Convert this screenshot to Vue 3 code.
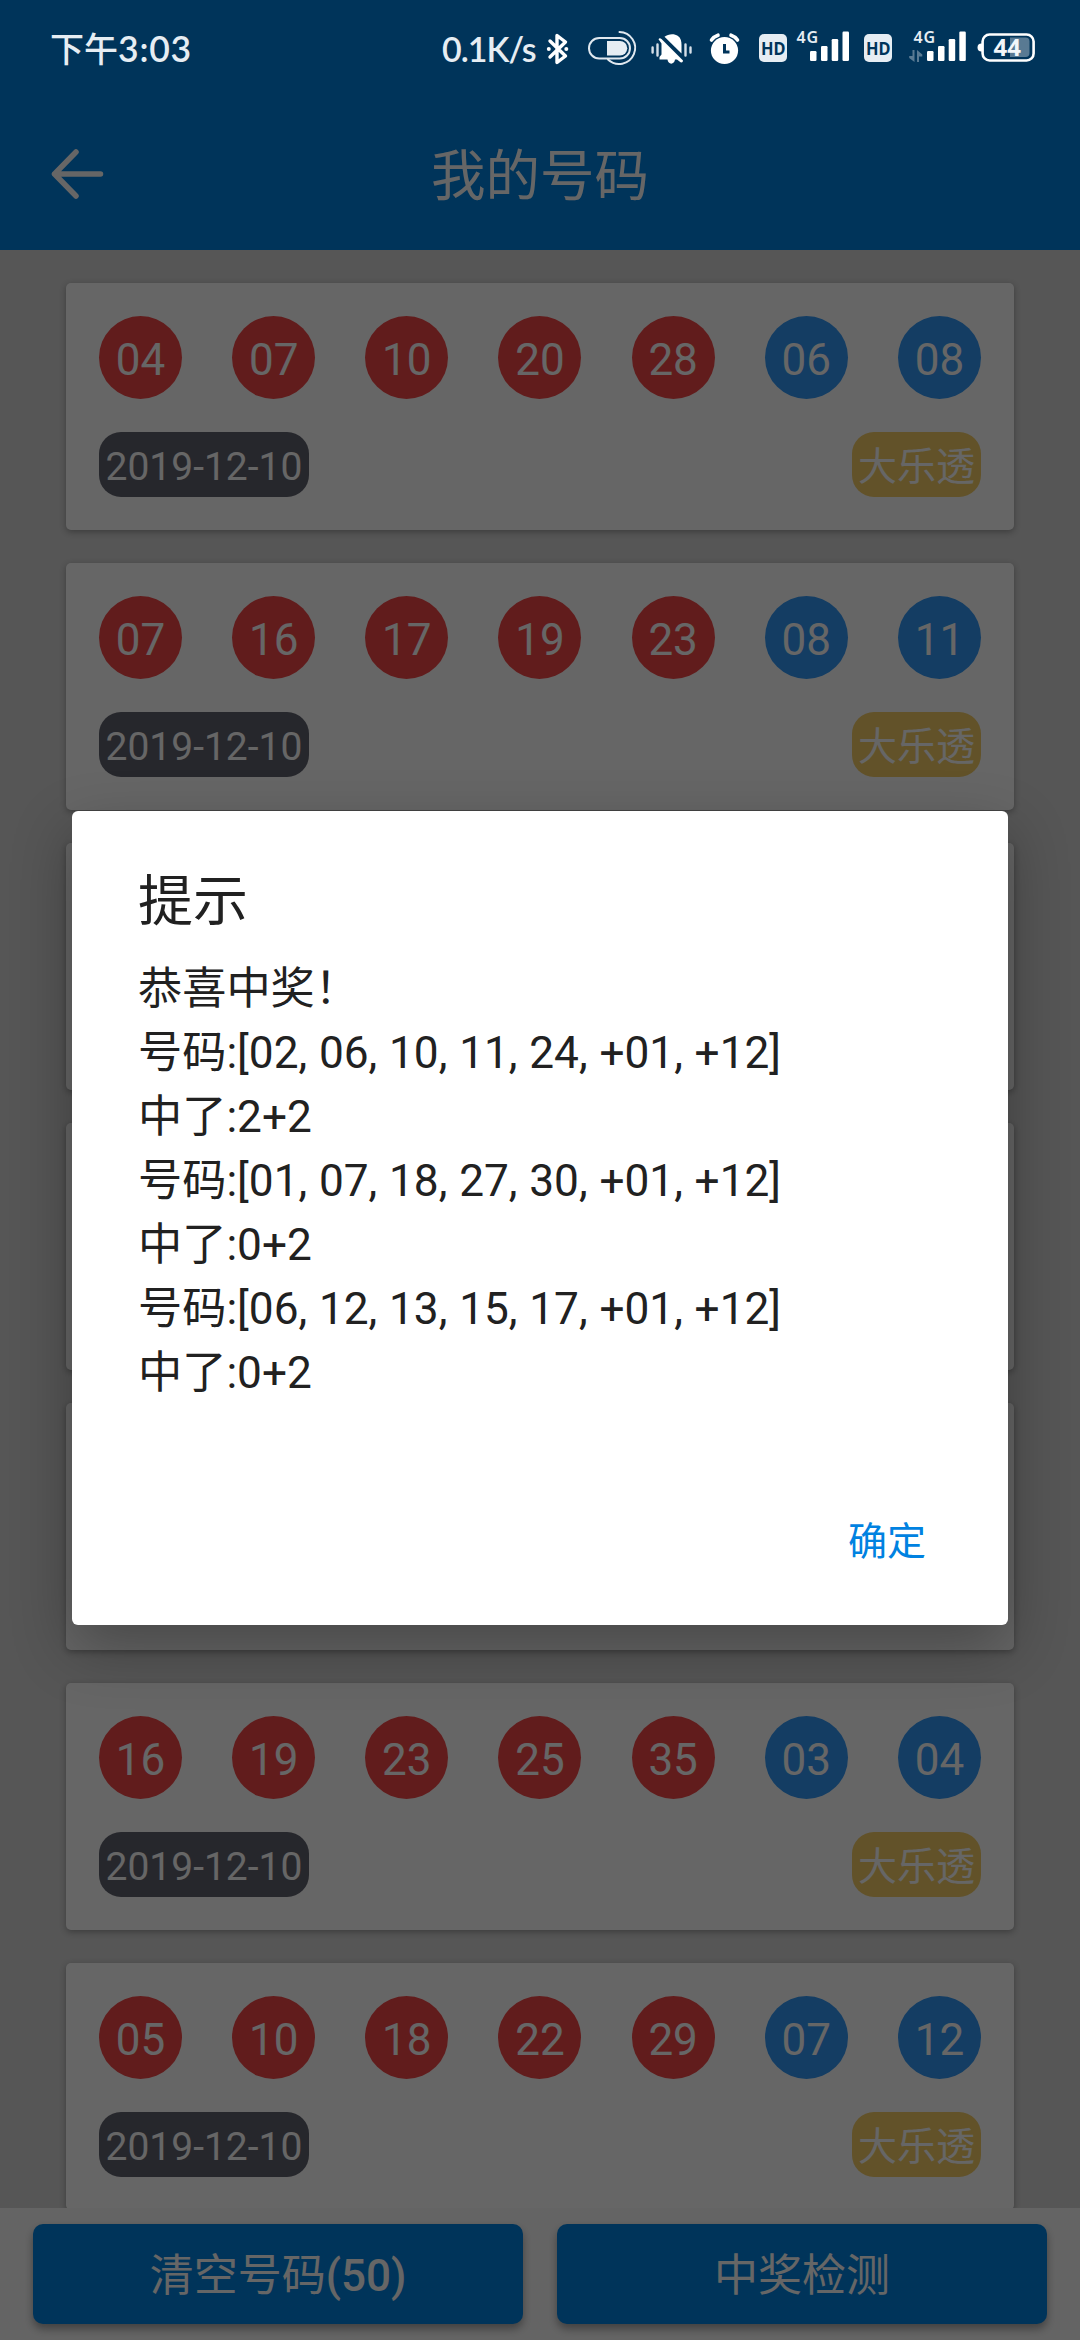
<script setup>
const cards = [
  { red: ['04', '07', '10', '20', '28'], blue: ['06', '08'] },
  { red: ['07', '16', '17', '19', '23'], blue: ['08', '11'] },
  { red: [], blue: [] },
  { red: [], blue: [] },
  { red: [], blue: [] },
  { red: ['16', '19', '23', '25', '35'], blue: ['03', '04'] },
  { red: ['05', '10', '18', '22', '29'], blue: ['07', '12'] },
]

const lines = [
  '恭喜中奖！',
  '号码:[02, 06, 10, 11, 24, +01, +12]',
  '中了:2+2',
  '号码:[01, 07, 18, 27, 30, +01, +12]',
  '中了:0+2',
  '号码:[06, 12, 13, 15, 17, +01, +12]',
  '中了:0+2',
]
</script>

<template>
  <div class="screen">
    <header class="header">
      <svg class="back" width="60" height="60" viewBox="0 0 60 60">
        <path d="M28 8 6.500 30 28 52M6.500 30H52.500" />
      </svg>
      <h1>我的号码</h1>
    </header>

    <main class="list">
      <section v-for="(card, i) in cards" :key="i" class="card">
        <template v-if="card.red.length">
          <div class="balls">
            <span v-for="n in card.red" :key="'r' + n" class="ball red">{{ n }}</span>
            <span v-for="n in card.blue" :key="'b' + n" class="ball blue">{{ n }}</span>
          </div>
          <div class="meta">
            <span class="tag date">2019-12-10</span>
            <span class="tag kind">大乐透</span>
          </div>
        </template>
      </section>
    </main>

    <footer class="actions">
      <button type="button">清空号码<b>(50)</b></button>
      <button type="button">中奖检测</button>
    </footer>

    <div class="mask">
      <div class="dialog">
        <h2>提示</h2>
        <div class="message">
          <p v-for="(line, i) in lines" :key="i">{{ line }}</p>
        </div>
        <div class="confirm">确定</div>
      </div>
    </div>

    <div class="status">
      <span class="time">下午<i>3:03</i></span>
      <span class="speed">0.1K/s</span>
      <!-- bluetooth -->
      <svg width="40" height="94" viewBox="540 0 40 94">
        <path class="line" stroke-width="3.400" d="M550 41 565.500 56 557 62.500V35.500L565.500 42 550 57" />
        <circle cx="548.800" cy="49" r="2" /><circle cx="566.300" cy="49" r="2" />
      </svg>
      <!-- power switch -->
      <svg width="62" height="94" viewBox="580 0 62 94">
        <rect class="line dim" x="589" y="38" width="41" height="20.500" rx="10.200" stroke-width="2" />
        <path class="soft" d="M607 41h13a7 7 0 0 1 0 14.500h-13z" />
        <path class="line dim" stroke-width="2" d="M619.500 32a16 16 0 1 1-11.500 27.500" />
      </svg>
      <!-- silent -->
      <svg width="58" height="94" viewBox="642 0 58 94">
        <path d="M664.500 36.800C668 34 674 33.200 678 36c3 2.200 3.500 5.500 3.500 9v8.500z" />
        <path d="M658.500 39.300q1-1.800 3-.3L683 60.500q0 2.500-2.500 1.800L677 59.500h-2c-.5 5.500-7 5.500-7.500 0H659.500v-2.500l2-2.500V43.500z" />
        <path class="line bars" stroke-width="2.400" d="M652.600 47.500v5M657.500 44.500v11M685.500 44.500v11M690.500 47.500v5" />
      </svg>
      <!-- alarm -->
      <svg width="52" height="94" viewBox="700 0 52 94">
        <circle cx="724.500" cy="50.500" r="13.600" />
        <path class="line" stroke-width="3.600" d="M711.500 40q2.500-3.500 6.500-4.800M737.500 40q-2.500-3.500-6.500-4.800" />
        <path class="cut" d="M724.500 44v8h5" />
      </svg>
      <!-- HD -->
      <svg width="40" height="94" viewBox="752 0 40 94">
        <rect class="soft" x="759" y="34" width="28" height="28" rx="5" />
        <text class="hd" x="761" y="55.300" textLength="24.500" lengthAdjust="spacingAndGlyphs">HD</text>
      </svg>
      <svg width="64" height="94" viewBox="792 0 64 94">
        <text class="net" x="796.500" y="43" textLength="21.500">4G</text>
        <rect x="810" y="51" width="6.500" height="10" rx="1.200" /><rect x="821" y="46" width="6.500" height="15" rx="1.200" />
        <rect x="831.700" y="39" width="6.500" height="22" rx="1.200" /><rect x="842.500" y="31.500" width="6.500" height="29.500" rx="1.200" />
      </svg>
      <svg width="44" height="94" viewBox="856 0 44 94">
        <rect class="soft" x="864" y="34" width="28" height="28" rx="5" />
        <text class="hd" x="866" y="55.300" textLength="24.500" lengthAdjust="spacingAndGlyphs">HD</text>
      </svg>
      <svg width="72" height="94" viewBox="900 0 72 94">
        <text class="net" x="913.500" y="43" textLength="21.500">4G</text>
        <path class="faint" d="M912.500 50h2v12l-5.300-4v-2h3.300zM917 62h2v-5.500h3.300v-2L917 50z" />
        <rect x="927" y="51" width="6.500" height="10" rx="1.200" /><rect x="938" y="46" width="6.500" height="15" rx="1.200" />
        <rect x="948.700" y="39" width="6.500" height="22" rx="1.200" /><rect x="959.300" y="31.500" width="6.500" height="29.500" rx="1.200" />
      </svg>
      <!-- battery -->
      <svg width="108" height="94" viewBox="972 0 108 94">
        <rect class="line" x="982.600" y="34.500" width="51" height="26" rx="7" stroke-width="2.600" />
        <path d="M982 43.500h-.5a3.500 3.500 0 0 0 0 8h.5z" />
        <path class="faint" d="M1010 37.500h15.500a4 4 0 0 1 4 4v11.500a4 4 0 0 1-4 4H1010z" />
        <text class="pct" x="993.500" y="56" textLength="27.500">44</text>
      </svg>
    </div>
  </div>
</template>

<style>
body {
  margin: 0;
  overflow: hidden;
}
</style>

<style scoped>
.screen {
  position: relative;
  display: flex;
  flex-direction: column;
  width: 1080px;
  height: 2340px;
  overflow: hidden;
  background: #d6d6d6;
  font-family: Roboto, "Noto Sans CJK SC", sans-serif;
}
h1, h2, p {
  margin: 0;
  font-weight: 400;
}

/* header */
.header {
  box-sizing: border-box;
  flex: 0 0 250px;
  display: flex;
  align-items: center;
  padding: 98px 48px 0;
  background: #0082e1;
  color: #fff;
}
.back {
  flex: none;
  fill: none;
  stroke: #fff;
  stroke-width: 5.5;
  stroke-linecap: round;
  stroke-linejoin: round;
}
.header h1 {
  flex: 1;
  margin-right: 60px;
  padding-top: 3px;
  text-align: center;
  font-size: 54.5px;
  line-height: 80px;
}

/* ticket list */
.list {
  flex: 1 1 0;
  min-height: 0;
  overflow: hidden;
  display: flex;
  flex-direction: column;
  gap: 33px;
  padding: 33px 66px 0;
}
.card {
  box-sizing: border-box;
  flex: 0 0 247px;
  padding: 33px;
  border-radius: 5px;
  background: #fff;
  box-shadow: 0 2px 6px rgba(0, 0, 0, 0.3);
}
.balls, .meta {
  display: flex;
  justify-content: space-between;
}
.meta {
  margin-top: 33px;
}
.ball {
  width: 83px;
  height: 83px;
  border-radius: 50%;
  color: #fff;
  text-align: center;
  font-size: 44px;
  line-height: 88px;
}
.red {
  background: #f34848;
}
.blue {
  background: #3299f8;
}
.tag {
  height: 65px;
  border-radius: 22px;
  color: #fff;
  font-size: 39px;
  line-height: 70px;
  padding: 0 6px;
}
.date {
  padding: 0 6.5px;
  background: #5f616e;
}
.kind {
  background: #f5cd66;
}

/* bottom buttons */
.actions {
  box-sizing: border-box;
  flex: 0 0 132px;
  display: flex;
  gap: 34px;
  padding: 16px 33px;
  background: #fafafa;
  position: relative;
}
.actions button {
  flex: 1;
  height: 100px;
  padding: 4px 0 0;
  border: 0;
  border-radius: 10px;
  background: #0082e1;
  color: #fff;
  font: 400 44px/96px Roboto, "Noto Sans CJK SC", sans-serif;
  box-shadow: 0 5px 8px rgba(0, 0, 0, 0.35);
}
.actions b {
  font-weight: 500;
}

/* dialog */
.mask {
  position: absolute;
  inset: 0;
  padding: 811px 72px 0;
  background: rgba(0, 0, 0, 0.6);
}
.dialog {
  box-sizing: border-box;
  height: 814px;
  padding: 50px 66px 0;
  border-radius: 6px;
  background: #fff;
  color: #212121;
  box-shadow: 0 22px 60px rgba(0, 0, 0, 0.3);
}
.dialog h2 {
  font-size: 55px;
  line-height: 80px;
}
.message {
  margin-top: 16px;
  font-size: 44.2px;
  line-height: 64px;
  word-spacing: 0.8px;
}
.message p {
  height: 64px;
  white-space: nowrap;
}
.confirm {
  margin: 108.5px 16px 0 0;
  text-align: right;
  color: #0082e1;
  font-size: 39px;
  line-height: 56px;
}

/* status bar */
.status {
  position: absolute;
  top: 0;
  left: 0;
  width: 1080px;
  height: 94px;
  display: flex;
  color: #e6edf3;
  line-height: 98px;
  font-family: Lato, "Noto Sans CJK SC", sans-serif;
  font-weight: 500;
  white-space: nowrap;
}
.status svg {
  flex: none;
  display: block;
  fill: #fff;
}
.time {
  box-sizing: border-box;
  flex: 0 0 442px;
  padding-left: 50px;
  font-size: 34px;
}
.time i {
  font-style: normal;
  font-weight: 600;
  font-size: 35.5px;
  letter-spacing: 0.8px;
}
.speed {
  flex: 0 0 98px;
  font-size: 34px;
  font-weight: 600;
  letter-spacing: -1px;
}
.status .line {
  fill: none;
  stroke: #fff;
  stroke-linecap: round;
  stroke-linejoin: round;
}
.status .dim {
  stroke: #e0e8ef;
}
.status .bars {
  stroke: #d5dfe8;
}
.status .faint {
  opacity: 0.35;
}
.status .cut {
  fill: none;
  stroke: #00345a;
  stroke-width: 3;
}
.status .soft {
  fill: #e6edf3;
}
.status .hd {
  fill: #00345a;
  font: 700 18px "Noto Sans", sans-serif;
}
.status .net {
  fill: #e6edf3;
  font: 600 16px "Noto Sans", sans-serif;
}
.status .pct {
  fill: #f2f6f9;
  font: 700 24px "Noto Sans", sans-serif;
}
</style>
